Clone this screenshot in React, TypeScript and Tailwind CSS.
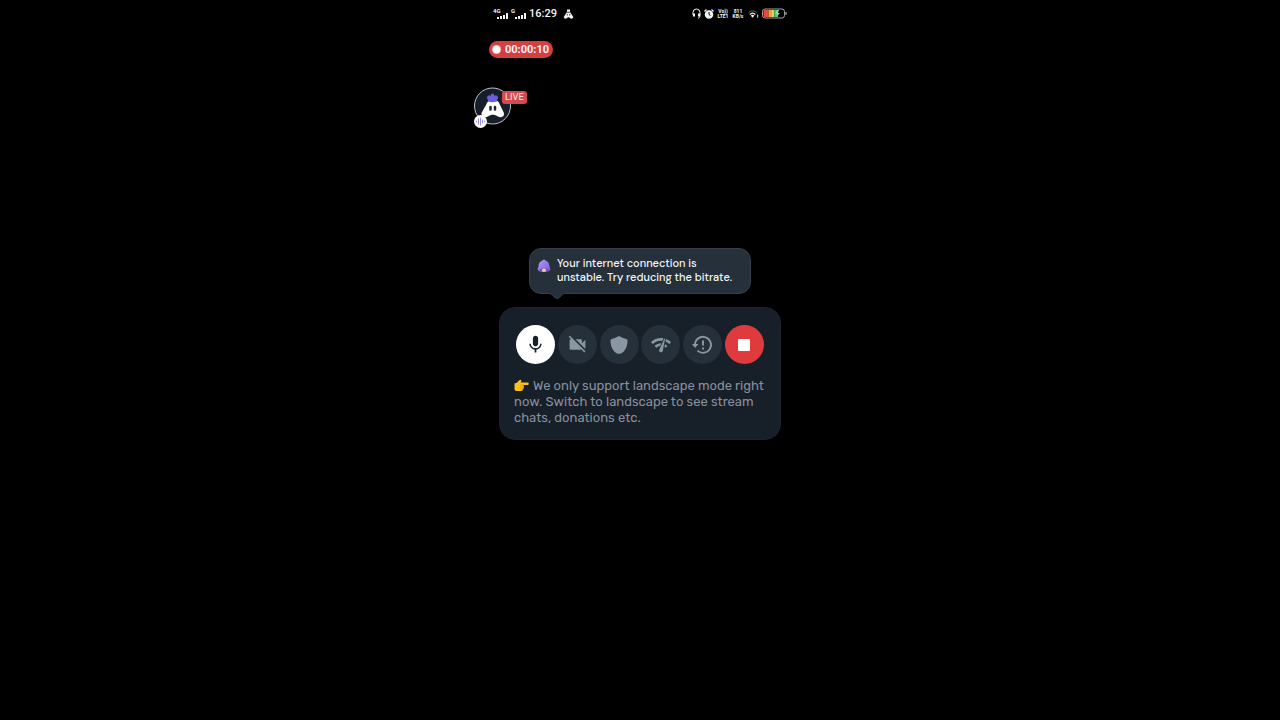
import { FC, ReactNode } from "react";
import { MdMic, MdNetworkCheck, MdVideocamOff } from "react-icons/md";

const Signal: FC<{ label: string }> = ({ label }) => (
  <div className="relative flex h-3 w-4 items-end justify-end pb-px">
    <span className="absolute -top-px left-0 text-[6px] leading-[7px] font-bold">
      {label}
    </span>
    <svg width="12" height="6" viewBox="0 0 12 6" fill="currentColor">
      <rect x="0" y="4" width="2" height="2" />
      <rect x="3" y="3" width="2" height="3" />
      <rect x="6" y="2" width="2" height="4" />
      <rect x="9" y="0" width="2" height="6" />
    </svg>
  </div>
);

const TinyLabel: FC<{ top: string; bottom: string }> = ({ top, bottom }) => (
  <div className="w-3 text-center text-[5px] leading-[5px] font-bold whitespace-nowrap">
    <div>{top}</div>
    <div>{bottom}</div>
  </div>
);

const StatusBar = () => (
  <header className="flex h-[27px] items-center justify-between px-[19px] font-[Roboto,sans-serif] text-gray-100">
    <div className="flex items-center gap-[2px]">
      <Signal label="4G" />
      <Signal label="G" />
      <span className="text-[11px] leading-3 font-medium">16:29</span>
      <svg className="ml-1" width="11" height="10" viewBox="0 0 20 20">
        <path
          d="M7 1h6v4l2 4 4 6c2 4-4 6-6 3-2-2-4-2-6 0-2 3-8 1-6-3l4-6 2-4z"
          fill="#f3f4f6"
        />
        <path d="M6 6.5h8M7.5 10v3M12.5 10v3" stroke="#000" strokeWidth="1.5" />
      </svg>
    </div>
    <div className="flex items-center gap-[3px]">
      <svg width="9" height="11" viewBox="0 0 18 22" fill="none" stroke="currentColor">
        <path d="M2 14V9a7 7 0 0 1 14 0v5c0 4-2 6-4 7" strokeWidth="2" />
        <path d="M4 11v6M14 11v6" strokeWidth="4" />
      </svg>
      <svg width="10" height="10" viewBox="0 0 20 20">
        <circle cx="10" cy="11" r="8.5" fill="#f3f4f6" />
        <path d="M1 5l4-4M19 5l-4-4" stroke="#f3f4f6" strokeWidth="2.5" />
        <path d="M10 6v5l3 2" stroke="#000" strokeWidth="2" fill="none" />
      </svg>
      <TinyLabel top="Vo&#41;&#41;" bottom="LTE1" />
      <TinyLabel top="811" bottom="KB/s" />
      <svg className="ml-px" width="11" height="10" viewBox="0 0 24 20" fill="none">
        <path d="M1 7c5-5 13-5 18 0" stroke="#6b7280" strokeWidth="2" />
        <path d="M4 11c4-4 8-4 12 0" stroke="#f3f4f6" strokeWidth="3" />
        <path d="M6 13c3-2 5-2 8 0l-4 5z" fill="#f3f4f6" />
        <path d="M21 11v7" stroke="#f3f4f6" strokeWidth="2" />
      </svg>
      <svg width="25" height="11" viewBox="0 0 25 11">
        <rect x="0.5" y="1" width="22" height="9" rx="2.5" fill="#000" stroke="#a3a3a3" />
        <path d="M2.5 2h4v7h-4q-1 0-1-1V3q0-1 1-1z" fill="#ef4444" />
        <path d="M6.5 2H10v7H6.5z" fill="#f59e42" />
        <path d="M10 2h2.5v7H10z" fill="#d9d45c" />
        <path d="M12.5 2H16v7h-3.5z" fill="#42c77a" />
        <path d="M15 2l-2 4h2l-1 3 4-4h-2l1-3z" fill="#86e5ac" />
        <path d="M23.5 4h1v3h-1z" fill="#c4c4c4" />
      </svg>
    </div>
  </header>
);

const Streamer = () => (
  <div className="relative mt-[29px] h-[38px] w-[38px]">
    <svg width="38" height="38" viewBox="0 0 38 38">
      <circle cx="18.5" cy="19" r="18" fill="#171e2a" stroke="#b6c1cb" />
      <path
        d="M14.5 14q4.500-2 9 0 1.500 1 2.500 4l3.500 7c2 4-2 6.500-5.500 4.500-3.500-2.500-7-2.500-10 0-3.500 2-8-.5-6-4.500l4-7q1-3 2.500-4z"
        fill="#fff"
      />
      <path
        d="M13.5 9q2-1.500 3 0 .3-2.500 2-2.500t2 2.500q1-1.500 3 0 1.500 2-.5 4v1.500q-4.500 1.500-9 0V13q-2-2-.5-4z"
        fill="#6a5ce0"
      />
      <path d="M16.5 20v2.500M21 20v2.500" stroke="#20222c" strokeWidth="2.5" strokeLinecap="round" />
    </svg>
    <span className="absolute top-1 left-7 rounded-[3px] bg-[#d34b4f] px-[3px] font-[Rubik,Roboto,sans-serif] text-[9px] leading-[13px] text-red-100">
      LIVE
    </span>
    <svg className="absolute top-7 left-0" width="13" height="13" viewBox="0 0 13 13">
      <circle cx="6.5" cy="6.5" r="6.5" fill="#fff" />
      <path
        d="M2.500 6v1M4.500 4v5M6.500 3v7M8.500 5v3M10.500 6v1"
        stroke="#7f74da"
        strokeWidth="0.8"
        strokeLinecap="round"
      />
    </svg>
  </div>
);

const Bell = () => (
  <svg className="mt-[3px] shrink-0" width="14" height="14" viewBox="0 0 28 28">
    <defs>
      <linearGradient id="bell" x1="0" y1="0" x2="1" y2="1">
        <stop offset="0" stopColor="#aaa0ff" />
        <stop offset="1" stopColor="#8057ce" />
      </linearGradient>
    </defs>
    <path
      d="M11 3q3-4 6 0c6 2 8 7 8 12l2 6q-3 5-13 5T1 21l2-6C3 9 5 5 11 3z"
      fill="url(#bell)"
    />
    <ellipse cx="14" cy="22" rx="9" ry="3" fill="#6540a8" />
    <ellipse cx="14" cy="22.5" rx="4.5" ry="3.5" fill="#efc5a8" />
  </svg>
);

const Notice = () => (
  <div
    role="status"
    className="relative mx-auto flex w-[222px] gap-[6px] rounded-[12px] border border-[#35404a] bg-[#26303a] pt-[7px] pr-2 pb-[9px] pl-[7px] text-[#f1f5f9]"
  >
    <Bell />
    <p className="font-['DM_Sans',Inter,sans-serif] text-[11px] leading-[14px] font-medium whitespace-nowrap">
      Your internet connection is
      <br />
      unstable. Try reducing the bitrate.
    </p>
    <svg className="absolute top-full left-4" width="22" height="6" viewBox="0 0 22 6">
      <path d="M0 0c5 0 6 2 8 4q3 3 6 0c2-2 3-4 8-4v-1H0z" fill="#26303a" />
      <path d="M0 0c5 0 6 2 8 4q3 3 6 0c2-2 3-4 8-4" fill="none" stroke="#35404a" />
    </svg>
  </div>
);

const ShieldIcon = () => (
  <svg width="20" height="20" viewBox="0 0 20 20" fill="currentColor">
    <path d="M9 1.400q1-.6 2 0c2 1.300 4 2 6.300 2.500q1.200.2 1.200 1.300c0 6-2 10.500-6 13q-2.500 1.200-5 0c-4-2.500-6-7-6-13q0-1.100 1.200-1.300C5 3.400 7 2.700 9 1.400z" />
  </svg>
);

const ReplayAlertIcon = () => (
  <svg width="22" height="22" viewBox="0 0 22 22" fill="none" stroke="currentColor">
    <path d="M3 11a8 8 0 1 1 2.500 5.600" strokeWidth="1.8" />
    <path d="M0 10h6.500L3 14z" fill="currentColor" stroke="none" />
    <path d="M11 6.500v5M11 13.500v2" strokeWidth="2" />
  </svg>
);

const StopIcon = () => (
  <svg width="14" height="14" viewBox="0 0 14 14">
    <rect x="1" y="1" width="12" height="12" rx="1" fill="#fff" />
  </svg>
);

const PointingHand = () => (
  <svg
    role="img"
    aria-label="Pointing right"
    className="mr-1 inline-block align-[-2px]"
    width="15"
    height="13"
    viewBox="0 0 30 26"
  >
    <path
      d="M1 9q5-1 8-5 4-4 5-2 2 2-1 5h15q3 2 0 5H18q3 2 1 4 2 3-1 4 0 4-4 4H6q-4 0-5-3z"
      fill="#fcc21b"
    />
    <path d="M12 12h7M12 16h7M12 20h6" stroke="#e08a13" strokeWidth="1.5" />
  </svg>
);

interface ControlProps {
  label: string;
  className?: string;
  children: ReactNode;
}

const Control: FC<ControlProps> = ({
  label,
  className = "bg-[#25303a] text-[#8997a3]",
  children,
}) => (
  <button
    type="button"
    aria-label={label}
    className={`flex size-[39px] items-center justify-center rounded-full ${className}`}
  >
    {children}
  </button>
);

const App = () => {
  return (
    <main className="min-h-screen bg-black">
      <div className="mx-auto max-w-[332px]">
        <StatusBar />

        <div className="mt-[14px] ml-[15px] flex w-fit items-center gap-[5px] rounded-full bg-[#d63e41] px-1 py-px text-red-50">
          <span className="size-[7px] rounded-full bg-white ring-1 ring-red-200" />
          <time className="font-[Roboto,sans-serif] text-[11px] leading-[15px] font-bold">
            00:00:10
          </time>
        </div>

        <Streamer />

        <div className="mt-[123px]">
          <Notice />
        </div>

        <section className="mx-[25px] mt-[13px] rounded-[16px] border border-[#1b242f] bg-[#171f29] px-[14px] pt-[17px] pb-[13px]">
          <div className="mx-[2px] flex justify-between">
            <Control label="Mute microphone" className="bg-white text-[#18202a]">
              <MdMic size={21} />
            </Control>
            <Control label="Turn camera on">
              <MdVideocamOff size={21} />
            </Control>
            <Control label="Privacy shield">
              <ShieldIcon />
            </Control>
            <Control label="Check network">
              <MdNetworkCheck size={22} />
            </Control>
            <Control label="Stream history">
              <ReplayAlertIcon />
            </Control>
            <Control label="Stop stream" className="bg-[#df3b3e]">
              <StopIcon />
            </Control>
          </div>
          <p className="mt-[14px] font-[Rubik,Roboto,sans-serif] text-[13px] leading-4 whitespace-nowrap text-[#87909d]">
            <PointingHand />
            We only support landscape mode right
            <br />
            now. Switch to landscape to see stream
            <br />
            chats, donations etc.
          </p>
        </section>
      </div>
    </main>
  );
};

export default App;
